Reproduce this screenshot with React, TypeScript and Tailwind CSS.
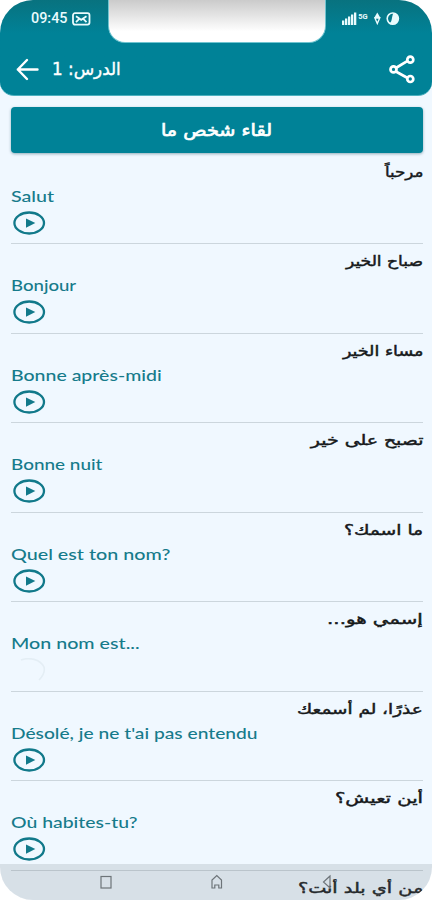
import { useLayoutEffect, useRef, useState } from "react";

type FitProps = {
  text: string;
  width: number;
  className: string;
  dir?: "rtl" | "ltr";
};

/* One line of text stretched horizontally to a given width. */
function Fit({ text, width, className, dir = "ltr" }: FitProps) {
  const ref = useRef<HTMLSpanElement>(null);
  const [scale, setScale] = useState(1);
  useLayoutEffect(() => {
    if (ref.current) setScale(width / ref.current.offsetWidth);
  }, [width, text]);
  return (
    <span
      ref={ref}
      dir={dir}
      className={`block w-max whitespace-nowrap ${dir === "rtl" ? "origin-right" : "origin-left"} ${className}`}
      style={{ transform: `scaleX(${scale})` }}
    >
      {text}
    </span>
  );
}

const phrases = [
  { ar: "مرحباً", arW: 38, fr: "Salut", frW: 43 },
  { ar: "صباح الخير", arW: 77, fr: "Bonjour", frW: 65 },
  { ar: "مساء الخير", arW: 80, fr: "Bonne après-midi", frW: 151 },
  { ar: "تصبح على خير", arW: 112, fr: "Bonne nuit", frW: 91 },
  { ar: "ما اسمك؟", arW: 79, fr: "Quel est ton nom?", frW: 159 },
  { ar: "إسمي هو...", arW: 96, fr: "Mon nom est...", frW: 129, loading: true },
  { ar: "عذرًا، لم أسمعك", arW: 126, fr: "Désolé, je ne t'ai pas entendu", frW: 247 },
  { ar: "أين تعيش؟", arW: 88, fr: "Où habites-tu?", frW: 126 },
];

const arabic = "font-['DejaVu_Sans','Noto_Sans',sans-serif]";
const arabicPhrase = `${arabic} text-[14px] leading-5 text-[#16191b] [-webkit-text-stroke:0.45px_#16191b]`;

function PlayIcon() {
  return (
    <svg className="block h-6 w-9" viewBox="0 0 36 24" fill="none">
      <ellipse cx="18.2" cy="12" rx="14.8" ry="10.5" stroke="#11798a" strokeWidth="2.3" />
      <path d="M15 7.5 24.3 12 15 16.7Z" fill="#11798a" />
    </svg>
  );
}

function Spinner() {
  return (
    <svg className="block h-6 w-9" viewBox="0 0 36 24" fill="none">
      <path d="M10 2C18-1 29 1 33 9C34 13 32 18 28 22" stroke="#e4eef5" strokeWidth="1.6" />
    </svg>
  );
}

function Header() {
  return (
    <header className="flex h-24 flex-col rounded-b-[14px] border-b border-[#4bb0bf] bg-linear-to-b from-[#08727f] via-[#008297] via-35% to-[#008297] text-white">
      <div className="flex h-[43px] items-start">
        <div className="flex w-[108px] items-center pt-[9px] pl-[31px]">
          <Fit text="09:45" width={37} className="font-['Roboto',sans-serif] text-[14px] leading-[19px] font-medium text-[#e9fbfd]" />
          <svg className="ml-[5px] h-[14px] w-[19px] shrink-0" viewBox="0 0 19 14" fill="none" stroke="#e9fbfd">
            <rect x="1" y="1.2" width="16.5" height="11.4" rx="2" strokeWidth="1.8" />
            <path d="M4 4.3 9.2 7.8 14.5 4.3M4 10.2 7 7.2M14.5 10.2 11.5 7.2" strokeWidth="1.8" />
          </svg>
        </div>
        <div className="h-[43px] w-[218px] rounded-b-[17px] border-x border-b border-[#70c4d0] bg-linear-to-b from-[#cbcbcb] to-white to-75%" />
        <svg className="mt-[10px] ml-[15px] h-4 w-[60px]" viewBox="0 0 60 16" fill="#e9fbfd">
          <rect x="1" y="10.5" width="2.3" height="4.5" />
          <rect x="4" y="8.5" width="2.3" height="6.5" />
          <rect x="7" y="6.5" width="2.3" height="8.5" />
          <rect x="10" y="4.5" width="2.3" height="10.5" />
          <rect x="13" y="2.5" width="2.3" height="12.5" />
          <text x="17.3" y="8.8" fontSize="7.5" fontFamily="Roboto" fontWeight="700">5G</text>
          <path d="M36.3 2.5 39.5 8H33.1Z" />
          <path d="M33.9 8H38.7L36.3 13.5Z" fill="none" stroke="#e9fbfd" strokeWidth="1.4" />
          <circle cx="51.8" cy="8.6" r="5.6" fill="none" stroke="#e9fbfd" strokeWidth="1.6" />
          <path d="M52.5 3A5.6 5.6 0 1 1 48.5 13.2C51.5 12 50.5 6 52.5 3Z" />
        </svg>
      </div>
      <div className="flex h-[52px] items-center">
        <svg className="ml-4 h-6 w-6 shrink-0" viewBox="0 0 24 24" fill="none" stroke="white" strokeWidth="2.4" strokeLinecap="round" strokeLinejoin="round">
          <path d="M21.5 12.5H1.8M11 3 1.8 12.5 11 22" />
        </svg>
        <div className="ml-[12px] w-[69px]">
          <Fit dir="rtl" text="الدرس: 1" width={69} className={`${arabic} float-right text-[17px] leading-6 [-webkit-text-stroke:0.4px_white]`} />
        </div>
        <svg className="mr-[16px] ml-auto h-8 w-[28px]" viewBox="0 0 28 32" fill="none" stroke="white" strokeWidth="2.7">
          <path d="M7 15.5 20 7.6M7 18 20 25.2" />
          <circle cx="22.3" cy="6.7" r="3" />
          <circle cx="5.5" cy="16.4" r="3" />
          <circle cx="22.3" cy="26" r="3" />
        </svg>
      </div>
    </header>
  );
}

export default function App() {
  return (
    <div className="h-[900px] w-[432px] overflow-hidden bg-white">
      <div className="relative h-[900px] w-[432px] overflow-hidden rounded-[33px] bg-[#f0f8ff]">
        <Header />
        <main className="pt-[11px] pr-[9px] pl-[11px]">
          <div className="flex h-[46px] items-center justify-center rounded-[4px] bg-[#008297] text-white shadow-[0_1px_3px_rgba(0,60,80,0.4)]">
            <div className="w-[111px]">
              <Fit dir="rtl" text="لقاء شخص ما" width={111} className={`${arabic} float-right text-[17px] leading-6 [-webkit-text-stroke:0.7px_white]`} />
            </div>
          </div>
          <div className="pt-[2px]">
            {phrases.map((p) => (
              <section key={p.fr} className="h-[89.45px] border-b border-[#ccd6dd]">
                <div className="flex h-[30px] justify-end pt-[7px]">
                  <Fit dir="rtl" text={p.ar} width={p.arW} className={arabicPhrase} />
                </div>
                <div className="h-[26px]">
                  <Fit text={p.fr} width={p.frW} className="font-['Lato',sans-serif] text-[16px] leading-[22px] font-medium text-[#167b8b]" />
                </div>
                {p.loading ? <Spinner /> : <PlayIcon />}
              </section>
            ))}
            <div className="flex justify-end pt-[7px]">
              <Fit dir="rtl" text="من أي بلد أنت؟" width={125} className={arabicPhrase} />
            </div>
          </div>
        </main>
        <nav className="absolute bottom-0 left-0 h-9 w-full bg-[#6a7278]/18">
          <svg className="block h-9 w-full" viewBox="0 0 432 36" fill="none" stroke="#6d7479" strokeWidth="1.2">
            <rect x="101" y="12.5" width="10" height="11.5" />
            <path d="M212 24V16L216.8 11.5 221.5 16V24H218.8V21H214.8V24Z" />
            <path d="M330 12 323.5 18 330 24Z" />
          </svg>
        </nav>
      </div>
    </div>
  );
}
